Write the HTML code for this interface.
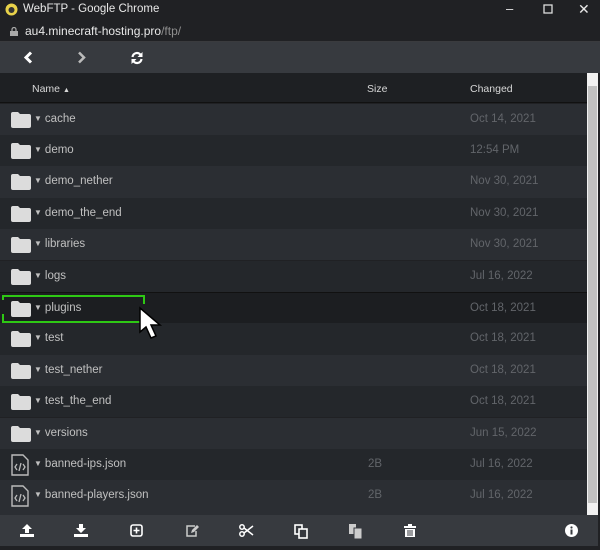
<!DOCTYPE html>
<html><head><style>
*{margin:0;padding:0;box-sizing:border-box}
html,body{width:600px;height:550px;overflow:hidden}
body{background:#202124;font-family:"Liberation Sans",sans-serif;position:relative;color:#c8c8c8}
.title{position:absolute;left:0;top:0;width:600px;height:20px;background:#202124;color:#e8e8e8;font-size:11.5px}
.url{position:absolute;left:0;top:20px;width:600px;height:22px;background:#202124;font-size:12px;color:#e8e8e8;border-bottom:1px solid #3a3b3e}
.nav{position:absolute;left:0;top:42px;width:600px;height:31px;background:#373a3f}
.hdr{position:absolute;left:0;top:73px;width:587px;height:30px;background:#1e2023;font-size:10.5px;color:#d8d8d8;border-bottom:1px solid #111}
.row{position:absolute;left:0;width:587px;height:31.4px;font-size:11.5px;color:#c0c0c0}
.row .n{position:absolute;left:34px;top:9px}
.row .n i{font-style:normal;font-size:8px;vertical-align:1px;margin-right:3px}
.row .s{position:absolute;left:368px;top:9px;color:#62656a}
.row .d{position:absolute;left:470px;top:9px;color:#62656a}
.row svg{position:absolute;left:10px;top:7px}
.a{background:#2b2e33}.b{background:#24272b}
.tb{position:absolute;left:0;top:515px;width:598px;height:31px;background:#373a3f}
.tb svg{position:absolute;top:9px}
.sb{position:absolute;left:587px;top:73px;width:11px;height:442px;background:#f1f1f1}
.th{position:absolute;left:1px;top:13px;width:9px;height:417px;background:#c1c1c1}
</style></head><body>
<div class="title"><svg style="position:absolute;left:5px;top:3px" width="13" height="13"><circle cx="6.5" cy="6.5" r="6" fill="#e8d24a"/><circle cx="6.5" cy="7" r="3" fill="#333"/></svg><span style="position:absolute;left:23px;top:3px">WebFTP - Google Chrome</span>
<span style="position:absolute;left:506px;top:1px;font-size:13px">–</span>
<svg style="position:absolute;left:543px;top:4px" width="10" height="10"><rect x="1" y="1" width="8" height="8" fill="none" stroke="#ddd" stroke-width="1.3"/></svg>
<span style="position:absolute;left:578px;top:1px;font-size:14px">✕</span></div>
<div class="url"><svg style="position:absolute;left:10px;top:7px" width="8" height="9"><rect x="0" y="4" width="8" height="5" fill="#aaa"/><path d="M2 4V2.5a2 2 0 0 1 4 0V4" fill="none" stroke="#aaa" stroke-width="1.2"/></svg><span style="position:absolute;left:25px;top:4px">au4.minecraft-hosting.pro<span style="color:#8e8e8e">/ftp/</span></span></div>
<div class="nav">
<svg style="position:absolute;left:23px;top:9px" width="10" height="13"><path d="M8 1.5L3 6.5l5 5" stroke="#fff" stroke-width="3" fill="none"/></svg>
<svg style="position:absolute;left:77px;top:9px" width="10" height="13"><path d="M2 1.5l5 5-5 5" stroke="#bbb" stroke-width="2.5" fill="none"/></svg>
<svg style="position:absolute;left:130px;top:9px" width="14" height="14"><path d="M2.5 6A4.5 4.5 0 0 1 11 4.5M11.5 8A4.5 4.5 0 0 1 3 9.5" stroke="#fff" stroke-width="2.2" fill="none"/><path d="M12.5 1v5h-5z M1.5 13V8h5z" fill="#fff"/></svg>
</div>
<div class="hdr"><span style="position:absolute;left:32px;top:10px">Name <span style="font-size:7px">▲</span></span><span style="position:absolute;left:367px;top:10px">Size</span><span style="position:absolute;left:470px;top:10px">Changed</span></div>

<div class="row a" style="top:103.5px"><svg width="22" height="18"><path d="M1 3a2 2 0 0 1 2-2h5l2 2h9a2 2 0 0 1 2 2v10a2 2 0 0 1-2 2H3a2 2 0 0 1-2-2z" fill="#dcdcdc"/></svg><span class="n"><i>▼</i>cache</span><span class="d">Oct 14, 2021</span></div>
<div class="row b" style="top:134.9px"><svg width="22" height="18"><path d="M1 3a2 2 0 0 1 2-2h5l2 2h9a2 2 0 0 1 2 2v10a2 2 0 0 1-2 2H3a2 2 0 0 1-2-2z" fill="#dcdcdc"/></svg><span class="n"><i>▼</i>demo</span><span class="d">12:54 PM</span></div>
<div class="row a" style="top:166.3px"><svg width="22" height="18"><path d="M1 3a2 2 0 0 1 2-2h5l2 2h9a2 2 0 0 1 2 2v10a2 2 0 0 1-2 2H3a2 2 0 0 1-2-2z" fill="#dcdcdc"/></svg><span class="n"><i>▼</i>demo_nether</span><span class="d">Nov 30, 2021</span></div>
<div class="row b" style="top:197.7px"><svg width="22" height="18"><path d="M1 3a2 2 0 0 1 2-2h5l2 2h9a2 2 0 0 1 2 2v10a2 2 0 0 1-2 2H3a2 2 0 0 1-2-2z" fill="#dcdcdc"/></svg><span class="n"><i>▼</i>demo_the_end</span><span class="d">Nov 30, 2021</span></div>
<div class="row a" style="top:229.1px"><svg width="22" height="18"><path d="M1 3a2 2 0 0 1 2-2h5l2 2h9a2 2 0 0 1 2 2v10a2 2 0 0 1-2 2H3a2 2 0 0 1-2-2z" fill="#dcdcdc"/></svg><span class="n"><i>▼</i>libraries</span><span class="d">Nov 30, 2021</span></div>
<div class="row b" style="top:260.5px"><svg width="22" height="18"><path d="M1 3a2 2 0 0 1 2-2h5l2 2h9a2 2 0 0 1 2 2v10a2 2 0 0 1-2 2H3a2 2 0 0 1-2-2z" fill="#dcdcdc"/></svg><span class="n"><i>▼</i>logs</span><span class="d">Jul 16, 2022</span></div>
<div class="row" style="top:291.9px;background:#1c1e21;border-top:1px solid #111"><svg width="22" height="18"><path d="M1 3a2 2 0 0 1 2-2h5l2 2h9a2 2 0 0 1 2 2v10a2 2 0 0 1-2 2H3a2 2 0 0 1-2-2z" fill="#dcdcdc"/></svg><span class="n"><i>▼</i>plugins</span><span class="d">Oct 18, 2021</span></div>
<div class="row b" style="top:323.3px"><svg width="22" height="18"><path d="M1 3a2 2 0 0 1 2-2h5l2 2h9a2 2 0 0 1 2 2v10a2 2 0 0 1-2 2H3a2 2 0 0 1-2-2z" fill="#dcdcdc"/></svg><span class="n"><i>▼</i>test</span><span class="d">Oct 18, 2021</span></div>
<div class="row a" style="top:354.7px"><svg width="22" height="18"><path d="M1 3a2 2 0 0 1 2-2h5l2 2h9a2 2 0 0 1 2 2v10a2 2 0 0 1-2 2H3a2 2 0 0 1-2-2z" fill="#dcdcdc"/></svg><span class="n"><i>▼</i>test_nether</span><span class="d">Oct 18, 2021</span></div>
<div class="row b" style="top:386.1px"><svg width="22" height="18"><path d="M1 3a2 2 0 0 1 2-2h5l2 2h9a2 2 0 0 1 2 2v10a2 2 0 0 1-2 2H3a2 2 0 0 1-2-2z" fill="#dcdcdc"/></svg><span class="n"><i>▼</i>test_the_end</span><span class="d">Oct 18, 2021</span></div>
<div class="row a" style="top:417.5px"><svg width="22" height="18"><path d="M1 3a2 2 0 0 1 2-2h5l2 2h9a2 2 0 0 1 2 2v10a2 2 0 0 1-2 2H3a2 2 0 0 1-2-2z" fill="#dcdcdc"/></svg><span class="n"><i>▼</i>versions</span><span class="d">Jun 15, 2022</span></div>
<div class="row b" style="top:448.9px"><svg width="20" height="22" style="top:5px"><path d="M2 1h11l5 5v15H2z" fill="none" stroke="#bbb" stroke-width="1.4"/><path d="M7 10l-2 3 2 3M13 10l2 3-2 3M11 9l-2 8" stroke="#bbb" stroke-width="1.3" fill="none"/></svg><span class="n"><i>▼</i>banned-ips.json</span><span class="s">2B</span><span class="d">Jul 16, 2022</span></div>
<div class="row a" style="top:480.3px;height:35px"><svg width="20" height="22" style="top:5px"><path d="M2 1h11l5 5v15H2z" fill="none" stroke="#bbb" stroke-width="1.4"/><path d="M7 10l-2 3 2 3M13 10l2 3-2 3M11 9l-2 8" stroke="#bbb" stroke-width="1.3" fill="none"/></svg><span class="n"><i>▼</i>banned-players.json</span><span class="s">2B</span><span class="d">Jul 16, 2022</span></div>

<div style="position:absolute;left:2px;top:295px;width:143px;height:28px;border:2.5px solid #2ec814;z-index:5"></div>
<div style="position:absolute;left:1px;top:300px;width:4px;height:14px;background:#1c1e21;z-index:6"></div>
<div style="position:absolute;left:143px;top:304px;width:4px;height:20px;background:#1c1e21;z-index:6"></div>
<svg style="position:absolute;left:138px;top:306px;z-index:7" width="30" height="36"><path d="M2 2v24l6-5 5 11 5-2-5-11h9z" fill="#fff" stroke="#000" stroke-width="1.5"/></svg>

<div class="sb"><div class="th"></div></div>
<div class="tb">
<svg style="left:20px" width="14" height="13"><path d="M7 0l5 5H9v4H5V5H2z M0 10h14v3H0z" fill="#fff"/></svg>
<svg style="left:74px" width="14" height="13"><path d="M5 0h4v4h3L7 9 2 4h3z M0 10h14v3H0z" fill="#fff"/></svg>
<svg style="left:130px" width="13" height="13"><rect x="1" y="1" width="11" height="11" rx="2" fill="none" stroke="#fff" stroke-width="1.6"/><path d="M6.5 3.5v6M3.5 6.5h6" stroke="#fff" stroke-width="1.6"/></svg>
<svg style="left:185px" width="14" height="13"><path d="M10 2H2v10h9V7" fill="none" stroke="#ccc" stroke-width="1.5"/><path d="M6 9l1-3 5-5 2 2-5 5z" fill="#ccc"/></svg>
<svg style="left:239px" width="15" height="13"><circle cx="3" cy="3" r="2.2" fill="none" stroke="#fff" stroke-width="1.5"/><circle cx="3" cy="10" r="2.2" fill="none" stroke="#fff" stroke-width="1.5"/><path d="M5 4l9 7M5 9l9-7" stroke="#fff" stroke-width="1.5"/></svg>
<svg style="left:294px" width="14" height="15"><rect x="1" y="1" width="7" height="9" fill="none" stroke="#fff" stroke-width="1.6"/><rect x="5" y="5" width="8" height="9" fill="#373a3f" stroke="#fff" stroke-width="1.6"/></svg>
<svg style="left:349px" width="13" height="15"><rect x="0" y="0" width="7" height="10" fill="#ccc"/><rect x="5" y="4" width="8" height="11" fill="#ccc" stroke="#373a3f"/></svg>
<svg style="left:404px" width="12" height="13"><path d="M0 2h12v2H0zM4 0h4v2H4zM1 5h10v8H1z" fill="#fff"/><path d="M4 6v6M6 6v6M8 6v6" stroke="#373a3f"/></svg>
<svg style="left:565px" width="13" height="13"><circle cx="6.5" cy="6.5" r="6.5" fill="#fff"/><rect x="5.5" y="5.5" width="2" height="5" fill="#373a3f"/><circle cx="6.5" cy="3.5" r="1.1" fill="#373a3f"/></svg>
</div>
</body></html>
